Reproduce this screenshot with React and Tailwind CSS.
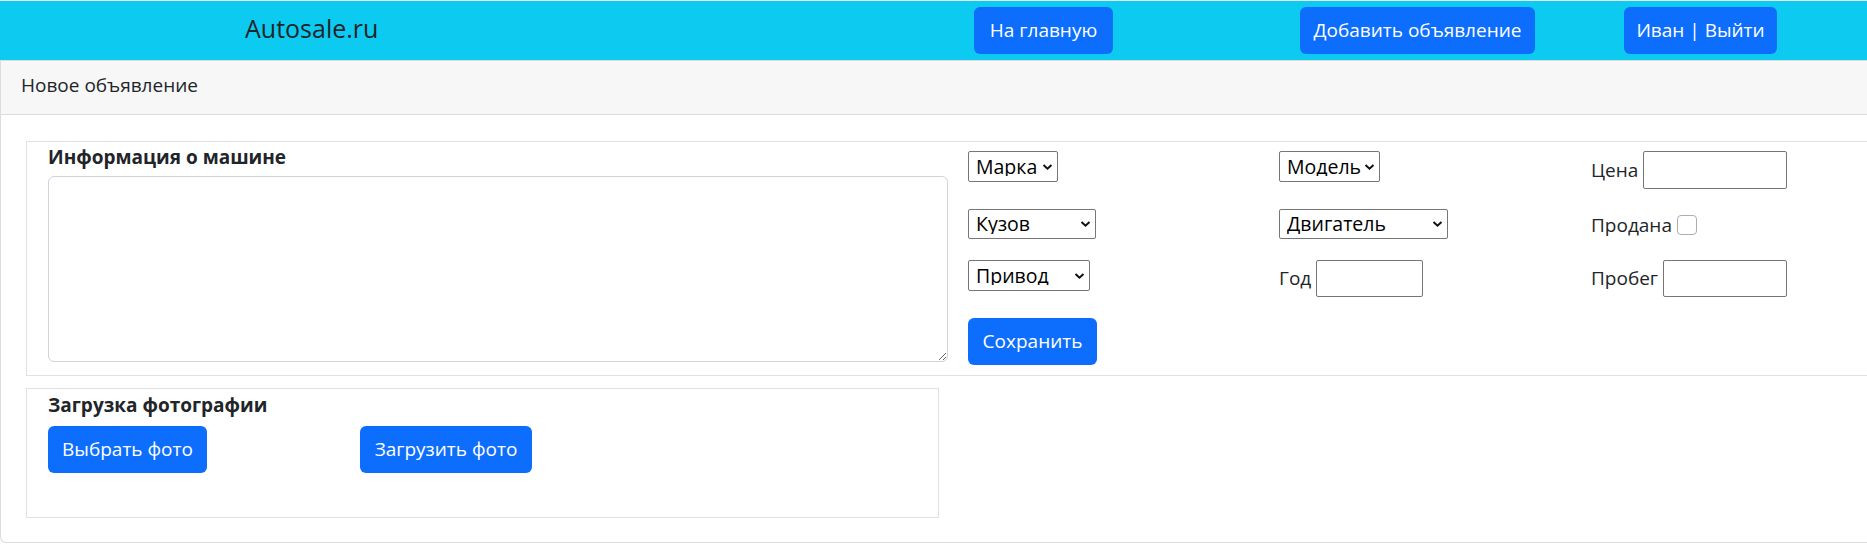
import React from 'react';

const Chevron = () => (
  <svg width="11" height="7" viewBox="0 0 11 7" className="pointer-events-none absolute right-[5px] top-1/2 -translate-y-1/2">
    <path d="M1.5 1.5 L5.5 5.2 L9.5 1.5" fill="none" stroke="#111" strokeWidth="2" />
  </svg>
);

const Select = ({ label, width, height = 'h-[31px]' }) => (
  <div className={`relative ${width} ${height}`}>
    <select className="h-full w-full appearance-none rounded-[2px] border border-[#767676] bg-white pl-[7px] pr-[18px] text-[19.5px] leading-none text-black outline-none">
      <option>{label}</option>
    </select>
    <Chevron />
  </div>
);

const BlueButton = ({ children, className = '' }) => (
  <button className={`flex h-[47px] items-center justify-center rounded-[6px] bg-[#0d6efd] text-[19px] text-white ${className}`}>
    {children}
  </button>
);

export default function App() {
  return (
    <div className="min-h-screen overflow-hidden bg-white font-['Open_Sans',sans-serif] text-[19px] leading-[1.5] text-[#212529]">
      {/* Navbar */}
      <nav className="flex h-[60px] items-center border-t border-[#e4e8ec] bg-[#0dcaf0]">
        <div className="w-[974px] pb-[5px] pl-[245px] text-[25px] leading-none text-[#212529]">Autosale.ru</div>
        <div className="w-[326px]">
          <BlueButton className="w-[139px]">На главную</BlueButton>
        </div>
        <div className="w-[324px]">
          <BlueButton className="w-[235px]">Добавить объявление</BlueButton>
        </div>
        <div>
          <BlueButton className="w-[153px]">Иван | Выйти</BlueButton>
        </div>
      </nav>

      {/* Card */}
      <div className="rounded-bl-[6px] border-y border-l border-[#dcdcdc]">
        <div className="flex h-[54px] items-center border-b border-[#dcdcdc] bg-[#f7f7f7] px-[20px] pb-[5px]">
          Новое объявление
        </div>

        <div className="pb-[24px] pl-[25px] pt-[26px]">
          {/* Car info */}
          <div className="flex h-[235px] border-y border-l border-[#dee2e6]">
            <div className="shrink-0 pl-[21px] pt-[1px]">
              <div className="font-bold">Информация о машине</div>
              <textarea className="mt-[4px] block h-[186px] w-[900px] rounded-[6px] border border-[#ced4da] outline-none" />
            </div>

            <div className="ml-[20px] grid shrink-0 grid-cols-[311px_312px_311px] grid-rows-[58px_51px_58px_47px] pt-[9px]">
              <div>
                <Select label="Марка" width="w-[90px]" />
              </div>
              <div>
                <Select label="Модель" width="w-[101px]" />
              </div>
              <div className="flex items-center gap-[5px] self-start">
                <span>Цена</span>
                <input className="h-[38px] w-[144px] rounded-[2px] border border-[#767676] outline-none" />
              </div>

              <div>
                <Select label="Кузов" width="w-[128px]" height="h-[30px]" />
              </div>
              <div>
                <Select label="Двигатель" width="w-[169px]" height="h-[30px]" />
              </div>
              <div className="flex h-[32px] items-center gap-[5px]">
                <span>Продана</span>
                <input type="checkbox" className="h-[20px] w-[20px] appearance-none rounded-[4px] border border-[#adadad] bg-white" />
              </div>

              <div>
                <Select label="Привод" width="w-[122px]" />
              </div>
              <div className="flex items-center gap-[5px] self-start">
                <span>Год</span>
                <input className="h-[37px] w-[107px] rounded-[2px] border border-[#767676] outline-none" />
              </div>
              <div className="flex items-center gap-[5px] self-start">
                <span>Пробег</span>
                <input className="h-[37px] w-[124px] rounded-[2px] border border-[#767676] outline-none" />
              </div>

              <div>
                <BlueButton className="w-[129px]">Сохранить</BlueButton>
              </div>
            </div>
          </div>

          {/* Photo upload */}
          <div className="mt-[12px] h-[130px] w-[913px] border border-[#dee2e6] pl-[21px] pt-[2px]">
            <div className="font-bold">Загрузка фотографии</div>
            <div className="mt-[6px] flex">
              <BlueButton className="w-[159px]">Выбрать фото</BlueButton>
              <BlueButton className="ml-[153px] w-[172px]">Загрузить фото</BlueButton>
            </div>
          </div>
        </div>
      </div>
    </div>
  );
}
